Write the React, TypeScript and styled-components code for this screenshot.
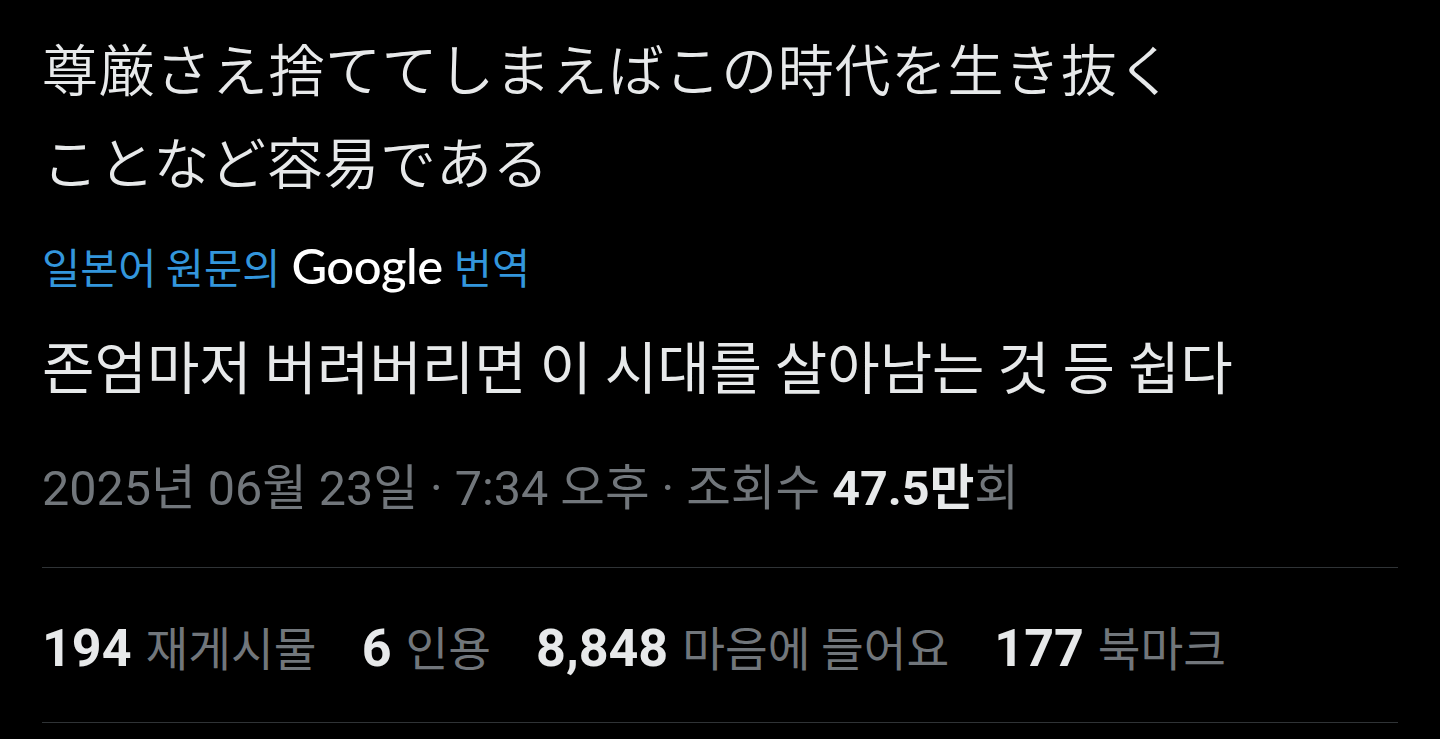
import React from 'react';
import styled, { createGlobalStyle } from 'styled-components';

const GlobalStyle = createGlobalStyle`
  html, body {
    margin: 0;
    padding: 0;
    background: #000;
  }
  body {
    font-family: Roboto, "Noto Sans CJK KR", sans-serif;
    color: #e7e9ea;
  }
`;

const Page = styled.main`
  width: 1440px;
  height: 739px;
  box-sizing: border-box;
  padding: 20px 42px 0;
  background: #000;
  overflow: hidden;
`;

const Original = styled.p`
  margin: 0;
  font-family: "Noto Sans CJK JP", sans-serif;
  font-size: 56px;
  line-height: 93px;
  font-weight: 350;
  letter-spacing: 0.6px;
  color: #e7e9ea;
`;

const TranslateLabel = styled.div`
  margin-top: 34px;
  display: flex;
  align-items: baseline;
  gap: 11px;
  height: 50px;
  font-family: "Noto Sans CJK KR", sans-serif;
  font-size: 41.5px;
  line-height: 50px;
  color: #3396dc;
`;

const GoogleWord = styled.span`
  font-family: Lato, "Open Sans", sans-serif;
  font-size: 49px;
  font-weight: 500;
  color: #ffffff;
  letter-spacing: -0.5px;
`;

const Translated = styled.p`
  margin: 39px 0 0;
  font-family: "Noto Sans CJK KR", sans-serif;
  font-size: 57px;
  line-height: 70px;
  color: #e7e9ea;
`;

const Meta = styled.div`
  margin-top: 60px;
  height: 60px;
  font-family: Roboto, "Noto Sans CJK KR", sans-serif;
  font-size: 48.5px;
  line-height: 60px;
  color: #71767b;
  white-space: nowrap;
`;

const Strong = styled.span`
  font-weight: 700;
  color: #e7e9ea;
`;

const Stats = styled.section`
  margin-top: 48px;
  border-top: 1px solid #2f3336;
  border-bottom: 1px solid #2f3336;
  padding: 48px 0 46px;
  display: flex;
  gap: 45px;
  height: 60px;
`;

const Stat = styled.div`
  display: flex;
  align-items: baseline;
  gap: 14px;
  line-height: 60px;
`;

const Count = styled.span`
  font-family: Roboto, sans-serif;
  font-size: 52px;
  font-weight: 700;
  color: #e7e9ea;
`;

const StatLabel = styled.span`
  font-family: "Noto Sans CJK KR", sans-serif;
  font-size: 46.5px;
  color: #71767b;
`;

const stats = [
  { count: '194', label: '재게시물' },
  { count: '6', label: '인용' },
  { count: '8,848', label: '마음에 들어요' },
  { count: '177', label: '북마크' },
];

export default function App() {
  return (
    <>
      <GlobalStyle />
      <Page>
        <Original>
          尊厳さえ捨ててしまえばこの時代を生き抜く
          <br />
          ことなど容易である
        </Original>
        <TranslateLabel>
          <span>일본어 원문의</span>
          <GoogleWord>Google</GoogleWord>
          <span>번역</span>
        </TranslateLabel>
        <Translated>존엄마저 버려버리면 이 시대를 살아남는 것 등 쉽다</Translated>
        <Meta>
          2025년 06월 23일 · 7:34 오후 · 조회수 <Strong>47.5만</Strong>회
        </Meta>
        <Stats>
          {stats.map((s) => (
            <Stat key={s.label}>
              <Count>{s.count}</Count>
              <StatLabel>{s.label}</StatLabel>
            </Stat>
          ))}
        </Stats>
      </Page>
    </>
  );
}
